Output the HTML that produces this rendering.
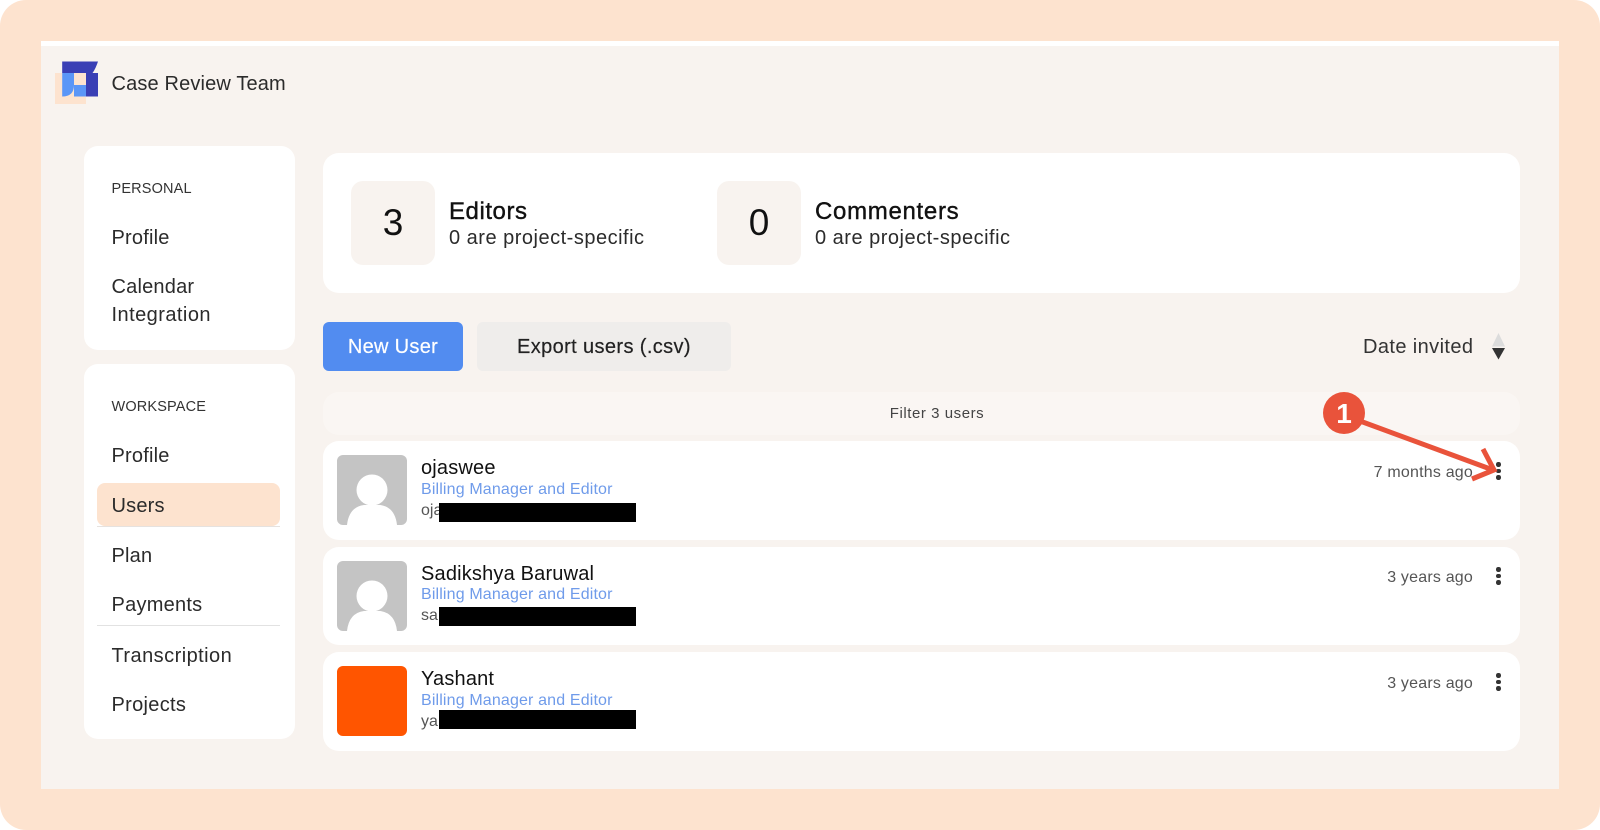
<!DOCTYPE html>
<html><head><meta charset="utf-8"><style>
*{box-sizing:border-box}
html,body{margin:0;padding:0;width:1600px;height:830px;overflow:hidden;background:#fff;font-family:"Liberation Sans",sans-serif;color:#2e2e2e}
.a{position:absolute;white-space:nowrap}
.card{position:absolute;background:#fff;border-radius:14px}
.t{position:absolute;white-space:nowrap;line-height:1}
.nav{font-size:20px;letter-spacing:.2px;left:111.500px;color:#2b2b2b}
.head{font-size:14.500px;letter-spacing:.15px;left:111.500px;color:#333}
.name{font-size:20px;letter-spacing:.18px;left:421px;color:#111}
.role{font-size:16px;letter-spacing:.15px;left:421px;color:#6f9bea}
.mail{font-size:16px;left:421px;color:#555}
.when{font-size:16px;letter-spacing:.2px;color:#555;right:127px}
.blk{position:absolute;left:439px;width:197px;height:19px;background:#000}
.av{position:absolute;left:337px;width:70px;height:70px;border-radius:6px;overflow:hidden;background:#c4c4c4}
.dots{position:absolute;left:1496px;width:6px}
.dots i{display:block;width:4.500px;height:4.500px;border-radius:50%;background:#333;margin:0 0 2.200px}
</style></head><body>
<div class="a" style="left:0;top:0;width:1600px;height:830px;background:#fde3cf;border-radius:26px"></div>
<div class="a" style="left:41px;top:41px;width:1518px;height:748px;background:#f8f3ef"></div>
<div class="a" style="left:41px;top:41px;width:1518px;height:5px;background:#fff"></div>

<svg class="a" style="left:55px;top:61px" width="45" height="45" viewBox="0 0 45 45">
<rect x="0" y="12" width="31" height="31" fill="#fde3cf"/>
<path d="M7.200 .5H43Q40.500 8 37.500 12H7.200Z" fill="#3a3fb5"/>
<rect x="31" y="12" width="12" height="23.500" fill="#3a3fb5"/>
<path d="M7.200 12H19V24Q19 35.500 7.200 35.500Z" fill="#5b96f7"/>
<rect x="19" y="24" width="12" height="11.500" fill="#5b96f7"/>
</svg>
<div class="t" style="left:111.500px;top:73.500px;font-size:20px;letter-spacing:.15px;color:#2b2b2b">Case Review Team</div>

<div class="card" style="left:84px;top:146px;width:211px;height:204px"></div>
<div class="card" style="left:84px;top:364px;width:211px;height:375px"></div>
<div class="t head" style="top:182px">PERSONAL</div>
<div class="t nav" style="top:228px">Profile</div>
<div class="t nav" style="top:277px">Calendar</div>
<div class="t nav" style="top:305px;letter-spacing:.45px">Integration</div>
<div class="t head" style="top:400px">WORKSPACE</div>
<div class="t nav" style="top:446px">Profile</div>
<div class="a" style="left:97px;top:483px;width:183px;height:43px;background:#fde3cf;border-radius:8px"></div>
<div class="a" style="left:97px;top:526px;width:183px;height:1px;background:#e6e2df"></div>
<div class="t nav" style="top:495.500px">Users</div>
<div class="t nav" style="top:546px">Plan</div>
<div class="t nav" style="top:595px;letter-spacing:.25px">Payments</div>
<div class="a" style="left:97px;top:625px;width:183px;height:1px;background:#e2e2e2"></div>
<div class="t nav" style="top:646px;letter-spacing:.45px">Transcription</div>
<div class="t nav" style="top:695px;letter-spacing:.3px">Projects</div>

<div class="card" style="left:323px;top:153px;width:1197px;height:140px;border-radius:16px"></div>
<div class="a" style="left:351px;top:181px;width:84px;height:84px;background:#f8f3ef;border-radius:12px"></div>
<div class="a" style="left:717px;top:181px;width:84px;height:84px;background:#f8f3ef;border-radius:12px"></div>
<div class="t" style="left:351px;top:204px;width:84px;text-align:center;font-size:37px;color:#111">3</div>
<div class="t" style="left:717px;top:204px;width:84px;text-align:center;font-size:37px;color:#111">0</div>
<div class="t" style="left:449px;top:200px;font-size:24px;letter-spacing:.55px;color:#111;-webkit-text-stroke:.4px #111">Editors</div>
<div class="t" style="left:449px;top:227.500px;font-size:20px;letter-spacing:.5px;color:#2b2b2b">0 are project-specific</div>
<div class="t" style="left:815px;top:200px;font-size:24px;letter-spacing:.7px;color:#111;-webkit-text-stroke:.4px #111">Commenters</div>
<div class="t" style="left:815px;top:227.500px;font-size:20px;letter-spacing:.5px;color:#2b2b2b">0 are project-specific</div>

<div class="a" style="left:323px;top:322px;width:140px;height:49px;background:#528cf0;border-radius:6px"></div>
<div class="t" style="left:323px;top:337px;width:140px;text-align:center;font-size:20px;letter-spacing:.3px;color:#fff;-webkit-text-stroke:.2px #fff">New User</div>
<div class="a" style="left:477px;top:322px;width:254px;height:49px;background:#efedeb;border-radius:6px"></div>
<div class="t" style="left:477px;top:337px;width:254px;text-align:center;font-size:20px;letter-spacing:.38px;color:#222;-webkit-text-stroke:.2px #222">Export users (.csv)</div>
<div class="t" style="left:1363px;top:337px;font-size:20px;letter-spacing:.4px;color:#333">Date invited</div>
<svg class="a" style="left:1492px;top:333px" width="14" height="27" viewBox="0 0 14 27"><path d="M6.500 0L13 13.500H0Z" fill="#dcdcdc"/><path d="M0 15H13L6.500 26.500Z" fill="#333"/></svg>

<div class="a" style="left:323px;top:392px;width:1197px;height:43px;background:#faf6f3;border-radius:16px"></div>
<div class="t" style="left:323px;top:405.500px;width:1228px;text-align:center;font-size:15px;letter-spacing:.55px;color:#444">Filter 3 users</div>

<div class="card" style="left:323px;top:441px;width:1197px;height:99px;border-radius:16px"></div>
<div class="card" style="left:323px;top:547px;width:1197px;height:98px;border-radius:16px"></div>
<div class="card" style="left:323px;top:652px;width:1197px;height:99px;border-radius:16px"></div>

<div class="av" style="top:455px"><svg width="70" height="70" viewBox="0 0 70 70"><circle cx="35" cy="35" r="15.500" fill="#fff"/><path d="M10 70Q12 52 27 50H43Q58 52 60 70Z" fill="#fff"/></svg></div>
<div class="av" style="top:561px"><svg width="70" height="70" viewBox="0 0 70 70"><circle cx="35" cy="35" r="15.500" fill="#fff"/><path d="M10 70Q12 52 27 50H43Q58 52 60 70Z" fill="#fff"/></svg></div>
<div class="av" style="top:666px;background:#ff5500"></div>

<div class="t name" style="top:457.500px">ojaswee</div>
<div class="t role" style="top:481.500px">Billing Manager and Editor</div>
<div class="t mail" style="top:503px">oja</div>
<div class="blk" style="top:503px"></div>
<div class="t when" style="top:465px">7 months ago</div>

<div class="t name" style="top:563.500px">Sadikshya Baruwal</div>
<div class="t role" style="top:586.500px">Billing Manager and Editor</div>
<div class="t mail" style="top:608px">sa</div>
<div class="blk" style="top:607px"></div>
<div class="t when" style="top:569.500px">3 years ago</div>

<div class="t name" style="top:668.500px">Yashant</div>
<div class="t role" style="top:692.500px">Billing Manager and Editor</div>
<div class="t mail" style="top:714px">ya</div>
<div class="blk" style="top:710px"></div>
<div class="t when" style="top:675.500px">3 years ago</div>

<div class="dots" style="top:462px"><i></i><i></i><i></i></div>
<div class="dots" style="top:567px"><i></i><i></i><i></i></div>
<div class="dots" style="top:673px"><i></i><i></i><i></i></div>

<svg class="a" style="left:1300px;top:380px" width="220" height="110" viewBox="0 0 220 110">
<path d="M60 41L193 90M183 69L194 90L172 99" fill="none" stroke="#e9533b" stroke-width="5"/>
<circle cx="44" cy="33" r="21" fill="#e9533b"/>
</svg>
<div class="t" style="left:1323px;top:400px;width:42px;text-align:center;font-size:28px;font-weight:700;color:#fff">1</div>
</body></html>
